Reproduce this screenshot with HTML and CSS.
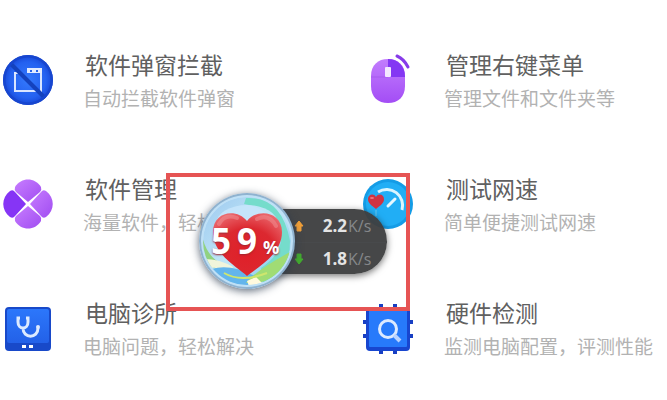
FILE: index.html
```
<!DOCTYPE html>
<html lang="zh-CN">
<head>
<meta charset="utf-8">
<title>电脑工具</title>
<link rel="stylesheet" href="styles.css">
</head>
<body>
<main class="tools">
  <section class="tool">
    <svg class="icon" viewBox="0 0 50 50" aria-hidden="true">
      <defs><radialGradient id="blue"><stop offset="0" stop-color="#3479fc"/><stop offset=".72" stop-color="#2461f0"/><stop offset="1" stop-color="#1746d5"/></radialGradient></defs>
      <circle cx="25" cy="25" r="25" fill="url(#blue)"/>
      <path d="M12 17V36H38V16" fill="none" stroke="#d9e5ff" stroke-width="2"/>
      <path d="M24 13H39V18H24ZM11 17h4v2h-4z" fill="#e2ebff"/>
      <path d="M27 15h2v2h-2zM33 15h2v2h-2z" fill="#2864e8"/>
      <path d="M8 9L42 43" stroke="#1442bd" stroke-width="4"/>
      <circle cx="25" cy="25" r="23.7" fill="none" stroke="#1746cf" stroke-width="2.5"/>
    </svg>
    <div class="copy"><h2>软件弹窗拦截</h2><p>自动拦截软件弹窗</p></div>
  </section>
  <section class="tool">
    <svg class="icon" viewBox="0 0 50 50" aria-hidden="true">
      <defs><linearGradient id="mouse" x2="0" y2="1"><stop stop-color="#c27dfd"/><stop offset="1" stop-color="#a34df5"/></linearGradient></defs>
      <path d="M7 21C7 10 14 4 24 4S41 10 41 21V31C41 42 34 48 24 48S7 42 7 31Z" fill="url(#mouse)"/>
      <path d="M24 4C34 4 41 11 41 22H24Z" fill="#8437f3"/>
      <path d="M7 22H24" stroke="#a75bee" stroke-width="1"/>
      <rect x="21" y="12" width="6" height="10" rx="1" fill="#f4e8ff"/>
      <path d="M33 1Q40 4 44 12" fill="none" stroke="#873be9" stroke-width="3" stroke-linecap="round"/>
    </svg>
    <div class="copy"><h2>管理右键菜单</h2><p>管理文件和文件夹等</p></div>
  </section>
  <section class="tool">
    <svg class="icon" viewBox="0 0 50 50" aria-hidden="true">
      <defs><linearGradient id="petal" x2="1" y2="1"><stop stop-color="#c77dff"/><stop offset="1" stop-color="#a14df1"/></linearGradient></defs>
      <path d="M25 23L13 13Q11 11 12 8C18-2 32-2 38 8Q39 11 37 13Z" fill="url(#petal)"/>
      <path d="M27 25L38 13Q40 10 43 12C52 19 52 31 43 38Q40 40 38 37Z" fill="url(#petal)"/>
      <path d="M25 27L37 37Q39 39 38 42C32 52 18 52 12 42Q11 39 13 37Z" fill="url(#petal)"/>
      <path d="M23 25L12 37Q10 40 7 38C-2 31-2 19 7 12Q10 10 12 13Z" fill="#8635f5"/>
    </svg>
    <div class="copy"><h2>软件管理</h2><p>海量软件，轻松</p></div>
  </section>
  <section class="tool">
    <svg class="icon" viewBox="0 0 50 50" aria-hidden="true">
      <circle cx="24" cy="25" r="25" fill="#149ce6"/><circle cx="24" cy="25" r="22" fill="#21aef5"/>
      <path d="M14 13A16 16 0 0 1 38 31" fill="none" stroke="#d9f5ff" stroke-width="3"/>
      <path d="M24 27L31 20" stroke="#e6f8ff" stroke-width="3" stroke-linecap="round"/>
      <path d="M12 31V37" stroke="#68c8ef"/>
      <path d="M12 30C7 26 4 24 4 20C4 15 10 14 12 18C14 14 20 15 20 20C20 24 17 26 12 30Z" fill="#cf3342"/>
      <ellipse cx="8" cy="19" rx="2" ry="1" fill="#ed7780"/>
    </svg>
    <div class="copy"><h2>测试网速</h2><p>简单便捷测试网速</p></div>
  </section>
  <section class="tool">
    <svg class="icon" viewBox="0 0 50 50" aria-hidden="true">
      <defs><linearGradient id="clinic" x2="0" y2="1"><stop stop-color="#2c77fb"/><stop offset="1" stop-color="#2361e8"/></linearGradient></defs>
      <rect x="2" y="4" width="46" height="44" rx="4" fill="#1849c9"/>
      <rect x="4" y="6" width="42" height="34" rx="2" fill="url(#clinic)"/>
      <path d="M17 15H15V19C15 27 25 27 25 19V15H23M20 25C20 36 35 36 35 25" fill="none" stroke="#dceaff" stroke-width="3"/>
      <circle cx="35" cy="24" r="2" fill="#dceaff"/>
      <path d="M19 42h4v3h-4zM26 42h4v3h-4z" fill="#fff"/>
    </svg>
    <div class="copy"><h2>电脑诊所</h2><p>电脑问题，轻松解决</p></div>
  </section>
  <section class="tool">
    <svg class="icon" viewBox="0 0 50 50" aria-hidden="true">
      <path d="M17 1V51M31 1V51M-1 19H49M-1 33H49" stroke="#183fc3" stroke-width="4"/>
      <rect x="2" y="4" width="44" height="44" rx="4" fill="#1846cf"/>
      <rect x="5" y="7" width="38" height="37" rx="1" fill="#277afb"/>
      <circle cx="24" cy="26" r="8.5" fill="none" stroke="#dceaff" stroke-width="3"/>
      <path d="M30 32L36 38" stroke="#b9d3ff" stroke-width="4"/>
    </svg>
    <div class="copy"><h2>硬件检测</h2><p>监测电脑配置，评测性能</p></div>
  </section>
</main>

<aside class="monitor" aria-label="系统状态">
  <div class="speeds">
    <div class="speed"><svg class="arrow" viewBox="0 0 10 12" aria-hidden="true"><path d="M5 1L9 6H7V11H3V6H1Z" fill="#f2a038" stroke="#f2a038" stroke-linejoin="round"/></svg><b>2.2</b><span>K/s</span></div>
    <div class="speed"><svg class="arrow" viewBox="0 0 10 12" aria-hidden="true"><path d="M3 1H7V6H9L5 11L1 6H3Z" fill="#43ad2f" stroke="#43ad2f" stroke-linejoin="round"/></svg><b>1.8</b><span>K/s</span></div>
  </div>
  <div class="ball">
    <svg class="globe" viewBox="0 0 96 96" aria-hidden="true">
      <defs>
        <radialGradient id="heart" cx=".5" cy=".65" r=".75"><stop stop-color="#df2029"/><stop offset=".55" stop-color="#dc2830"/><stop offset="1" stop-color="#ed7378"/></radialGradient>
        <linearGradient id="sky" x2="1" y2="1"><stop stop-color="#9dc8ef"/><stop offset=".5" stop-color="#c0e7f7"/><stop offset="1" stop-color="#79c3eb"/></linearGradient>
        <clipPath id="disc"><circle cx="48" cy="48" r="44"/></clipPath>
      </defs>
      <circle cx="48" cy="48" r="48" fill="#8fb2cf"/><circle cx="48" cy="48" r="46" fill="#bfe0f6"/>
      <g clip-path="url(#disc)">
        <circle cx="48" cy="48" r="44" fill="url(#sky)"/>
        <path d="M47 5Q83 3 91 48Q91 80 64 91L62 75Q83 61 82 43Q72 15 45 11Z" fill="#75dccb"/>
        <path d="M3 43Q8 65 25 72L26 78Q9 76 3 63Z" fill="#91d281"/>
        <path d="M4 66Q21 66 34 74L30 80Q17 73 6 75Z" fill="#f1f5db"/>
        <path d="M13 76Q31 70 58 84L48 93Q24 91 13 76Z" fill="#63b5ec"/>
        <path d="M47 90Q56 78 91 59Q84 84 62 89Z" fill="#a0dc74"/>
        <path d="M48 88L57 84L63 90L50 93Z" fill="#fff9de"/>
        <path d="M25 80Q42 90 68 80" fill="none" stroke="#cfe66d" stroke-width="2"/>
        <ellipse cx="48" cy="31" rx="31" ry="19" fill="#c7e5fc" opacity=".9"/>
      </g>
      <path d="M48 83C40 75 14 62 14 39C14 18 38 15 48 28C58 15 83 18 83 39C83 62 57 75 48 83Z" fill="url(#heart)"/>
      <path d="M20 31Q26 20 38 25M58 26Q70 20 77 33" fill="none" stroke="#f29a9b" stroke-width="4" stroke-linecap="round" opacity=".45"/>
    </svg>
    <strong class="score"><span>5</span><span>9</span><small>%</small></strong>
  </div>
</aside>
</body>
</html>
```

FILE: styles.css
```
* { box-sizing: border-box; }
body {
  margin: 0;
  background: #fff;
  font-family: "Noto Sans CJK SC", sans-serif;
}
.tools {
  display: grid;
  grid-template-columns: 361fr 303fr;
  row-gap: 64px;
  padding: 50px 0 0 3px;
}
.tool {
  display: flex;
  align-items: center;
  gap: 30px;
  min-width: 0;
  height: 60px;
  white-space: nowrap;
}
.icon { flex: none; width: 50px; height: 50px; overflow: visible; }
.copy { padding-top: 4px; }
.copy h2, .copy p { margin: 0; font-weight: 400; }
.copy h2 { padding-left: 2px; font-size: 23px; line-height: 32px; color: #606060; }
.copy p { font-size: 19px; line-height: 36px; color: #b2b2b2; }
.monitor {
  position: absolute;
  left: 166px;
  top: 173px;
  width: 244px;
  height: 138px;
  border: 4px solid #e65454;
}
.speeds {
  position: absolute;
  left: 74px;
  top: 32px;
  width: 143px;
  height: 65px;
  padding-left: 50px;
  border-radius: 0 33px 33px 0;
  background: rgba(62, 63, 65, .96);
  box-shadow: 0 2px 7px rgba(0, 0, 0, .55);
  font-family: "Open Sans", sans-serif;
}
.speed {
  display: grid;
  grid-template-columns: 10px 43px 26px;
  align-items: center;
  height: 33px;
  line-height: 32px;
}
.speed + .speed { border-top: 1px solid #484a4c; }
.arrow { width: 10px; height: 12px; }
.speed b { font-size: 17px; font-weight: 700; color: #e4e4e4; text-align: right; }
.speed span { padding-left: 1px; font-size: 16px; color: #85878a; }
.ball {
  position: absolute;
  left: 29px;
  top: 16px;
  width: 96px;
  height: 96px;
  border-radius: 50%;
  box-shadow: 0 2px 8px rgba(40, 55, 75, .75);
}
.globe { display: block; width: 100%; height: 100%; }
.score {
  position: absolute;
  left: 12px;
  top: 24px;
  display: flex;
  align-items: baseline;
  gap: 6px;
  color: #fff;
  font-family: "Noto Sans", sans-serif;
  font-size: 35px;
  line-height: 48px;
  text-shadow: 0 1px 2px #9b2831;
}
.score small { font-size: 18px; }
```
